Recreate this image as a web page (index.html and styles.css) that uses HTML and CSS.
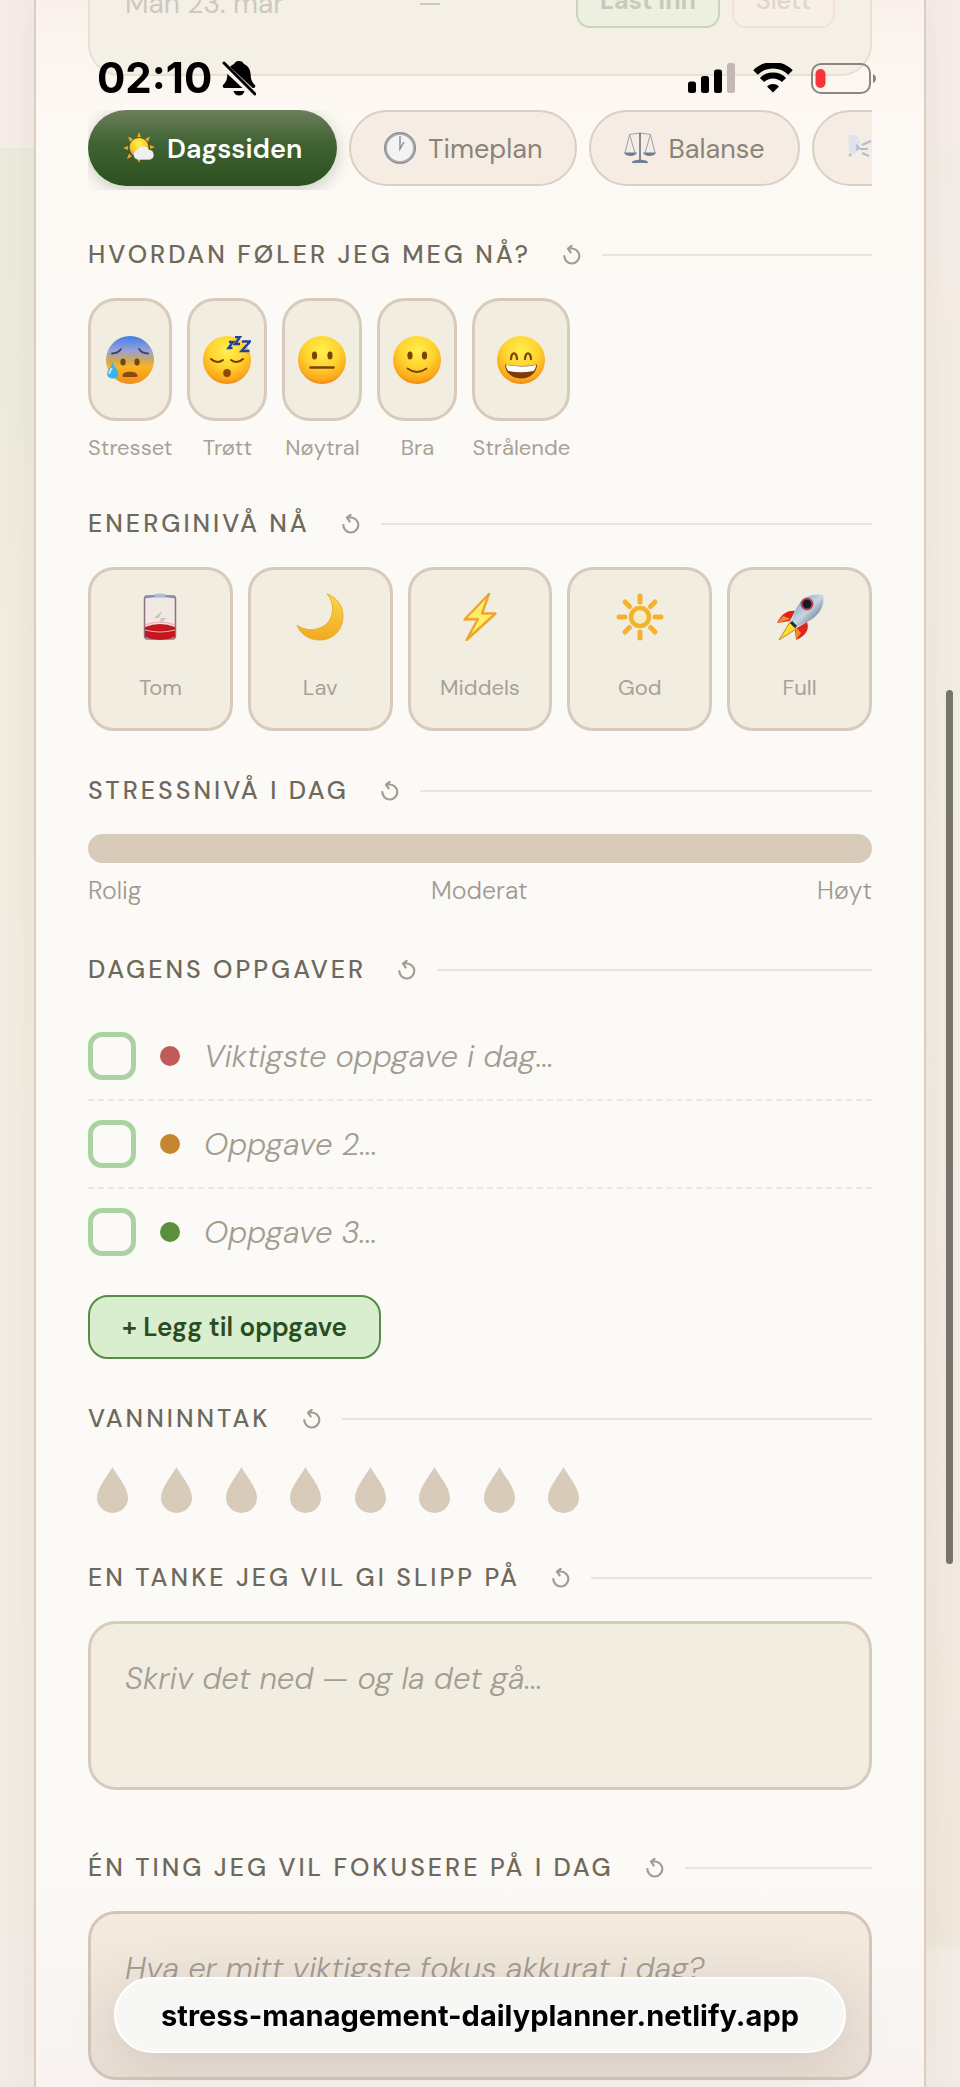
FILE: index.html
```html
<!DOCTYPE html>
<html lang="no">
<head>
    <meta charset="UTF-8">
    <meta name="viewport" content="width=device-width, initial-scale=1">
    <title>Dagsplanlegger</title>
    <link rel="stylesheet" href="styles.css">
</head>
<body>
    <!-- Shared drawings -->
    <svg class="defs" aria-hidden="true">
        <defs>
            <radialGradient id="skin" cx="50%" cy="30%" r="72%">
                <stop offset="0" stop-color="#fff04e"/>
                <stop offset="0.5" stop-color="#ffd32e"/>
                <stop offset="0.85" stop-color="#fba71c"/>
                <stop offset="1" stop-color="#ea8214"/>
            </radialGradient>
            <linearGradient id="cold" x1="0" y1="0" x2="0" y2="1">
                <stop offset="0" stop-color="#3f7fe8"/>
                <stop offset="0.3" stop-color="#9aa0d8"/>
                <stop offset="0.5" stop-color="#c9a95e"/>
                <stop offset="0.65" stop-color="#fcb322"/>
                <stop offset="1" stop-color="#ee8d1d"/>
            </linearGradient>
            <linearGradient id="gold" x1="0" y1="0" x2="0" y2="1">
                <stop offset="0" stop-color="#fbd54a"/>
                <stop offset="1" stop-color="#f2a91f"/>
            </linearGradient>
            <linearGradient id="steel" x1="0" y1="0" x2="1" y2="1">
                <stop offset="0" stop-color="#4c94d8"/>
                <stop offset="0.5" stop-color="#c9d6e0"/>
                <stop offset="1" stop-color="#2c4a6e"/>
            </linearGradient>
            <symbol id="reset" viewBox="0 0 18 20">
                <path d="M1.300 11a7.500 7.500 0 1 0 7.500-7.500H5.500M8.600.9 5 3.600l2.600 3.800" fill="none" stroke="currentColor" stroke-width="2.200" stroke-linecap="round" stroke-linejoin="round"/>
            </symbol>
            <symbol id="drop" viewBox="0 0 31 46">
                <path d="M15.500 0C20 9 31 20 31 31a15.500 15 0 0 1-31 0C0 20 11 9 15.500 0z" fill="currentColor"/>
            </symbol>
        </defs>
    </svg>

    <header class="statusbar">
        <span class="clock">02:10</span>
        <svg class="bell" width="34" height="36" viewBox="0 0 34 36" aria-hidden="true">
            <path d="M17 1c3 0 4.500 1.500 4.800 3 4.700 1.800 6.700 6 6.900 11 .2 5 1.300 7 4.300 10 .8 1.400 0 3-1.600 3H2.600C1 28 .2 26.400 1 25c3-3 4.100-5 4.300-10 .2-5 2.200-9.200 6.900-11 .3-1.500 1.800-3 4.800-3z"/>
            <path d="M11.500 31h11c-.8 3-2.800 4.500-5.500 4.500S12.300 34 11.500 31z"/>
            <path d="M1 5l32 30" stroke="#faf3ea" stroke-width="7"/>
            <path d="M2 3l31 31" stroke="#000" stroke-width="3" stroke-linecap="round"/>
        </svg>
        <span class="fill"></span>
        <svg width="47" height="30" viewBox="0 0 47 30" aria-hidden="true">
            <rect x="0" y="18.500" width="8" height="11.500" rx="2.500"/>
            <rect x="13" y="13" width="8" height="17" rx="2.500"/>
            <rect x="26" y="6.500" width="8" height="23.500" rx="2.500"/>
            <rect x="39" y="0" width="8" height="30" rx="2.500" fill="#c2b9b4"/>
        </svg>
        <svg class="wifi" width="40" height="30" viewBox="0 0 40 30" aria-hidden="true">
            <path d="M2.500 9.500a25 25 0 0 1 35 0" fill="none" stroke="#000" stroke-width="6.500"/>
            <path d="M9 17a15.500 15.500 0 0 1 22 0" fill="none" stroke="#000" stroke-width="6"/>
            <path d="M20 29.500l-6-6a8.500 8.500 0 0 1 12 0z"/>
        </svg>
        <svg width="66" height="31" viewBox="0 0 66 31" aria-hidden="true">
            <rect x="1" y="1" width="58" height="29" rx="9" fill="none" stroke="#8b8681" stroke-width="2"/>
            <rect x="4.500" y="6" width="10" height="19" rx="5" fill="#fa3438"/>
            <path d="M62 11c4 1 4 8 0 9z" fill="#8b8681"/>
        </svg>
    </header>

    <main class="sheet">
        <div class="history">
            <div class="history-row">
                <span class="history-date">Man 23. mar</span>
                <span class="history-value">—</span>
                <button class="mini load" type="button">Last inn</button>
                <button class="mini delete" type="button">Slett</button>
            </div>
        </div>

        <nav class="tabs">
            <button class="tab active" type="button">
                <svg width="32" height="32" viewBox="0 0 32 32" aria-hidden="true">
                    <path d="M16 0l2 5h-4zM5 4.500l5 2.500-3 3zM27 4.500l-2 5.500-3-3zM0 16l5-2v4zM32 15l-5-2v4zM4 27l2-5.500 3 3zM16 31l-2-5h4z" fill="#f4a423"/>
                    <circle cx="16" cy="15.500" r="9.500" fill="url(#skin)"/>
                    <path d="M15 27.500a5 5 0 0 1-.5-9.800 6.500 6.500 0 0 1 11.500 0 5 5 0 0 1 1 9.800z" fill="#eef0f2"/>
                    <path d="M12 25.500c4 2 12 2 17.500 0-.8 1.400-1.800 2-3 2H15c-1.400 0-2.400-.7-3-2z" fill="#cfd5da"/>
                </svg>
                Dagssiden
            </button>
            <button class="tab" type="button">
                <svg width="32" height="32" viewBox="0 0 32 32" aria-hidden="true">
                    <circle cx="16" cy="16" r="14.500" fill="#f3f3f5" stroke="#a9aaac" stroke-width="3"/>
                    <circle cx="16" cy="16" r="15.500" fill="none" stroke="#88898c" stroke-width="1"/>
                    <path d="M16 4v13l4-7" fill="none" stroke="#8f9092" stroke-width="1.500"/>
                </svg>
                Timeplan
            </button>
            <button class="tab" type="button">
                <svg width="32" height="32" viewBox="0 0 32 32" aria-hidden="true">
                    <path d="M5 2.500q11-3 22 0M5.500 2.500L1 21M5.500 2.500L11 21M26.500 2.500L21 21M26.500 2.500L31 21" fill="none" stroke="#9aa2ab" stroke-width="1"/>
                    <path d="M16 1v28" stroke="#69727c" stroke-width="1.600"/>
                    <path d="M0 20.500h13c-1 4.500-12 4.500-13 0zM19 20.500h13c-1 4.500-12 4.500-13 0zM8 31c0-3 4-2.500 8-3.500 4 1 8 .5 8 3.500z" fill="#6f7f92"/>
                </svg>
                Balanse
            </button>
            <button class="tab" type="button" aria-label="Pust">
                <svg width="32" height="32" viewBox="0 0 32 32" aria-hidden="true">
                    <path d="M1 3h9c2 3 4 8 3 12-1 2-3 2-2 5-2 2-5 1-6 5l-3-1V12z" fill="#dfe4ea"/>
                    <path d="M9 13l3 3-3 2M4 22l-2 2M13 17h8M15 13l9-4M15 21l7 3" fill="none" stroke="#b1bccd" stroke-width="2"/>
                </svg>
            </button>
        </nav>

        <section class="block">
            <h2 class="title">Hvordan føler jeg meg nå?
                <button class="reset" type="button" aria-label="Nullstill humør"><svg><use href="#reset"/></svg></button>
            </h2>
            <div class="moods">
                <button class="mood" type="button">
                    <span class="face">
                        <svg viewBox="0 0 48 48" aria-hidden="true">
                            <circle cx="24" cy="24" r="24" fill="url(#cold)"/>
                            <path d="M6 17.500q6 0 9-4.500M33 13q3 4.500 9 4.500" fill="none" stroke="#3c3f6c" stroke-width="1.800" stroke-linecap="round"/>
                            <ellipse cx="17" cy="26" rx="2.600" ry="3.500" fill="#7a4307"/>
                            <ellipse cx="31" cy="26" rx="2.600" ry="3.500" fill="#7a4307"/>
                            <path d="M16.500 39c1-4.500 14-4.500 15 0 .4 1.800-1 2-2 2h-11c-1 0-2.400-.2-2-2z" fill="#8b4a0b"/>
                            <path d="M6.500 26c1.500 5 6 8 6 12.500a6 5.500 0 0 1-11.500 0C1 34 5.500 31 6.500 26z" fill="#39b3ef"/>
                            <path d="M6 32c-2 3-3 4-2.500 6" stroke="#b9e9fd" stroke-width="2" fill="none"/>
                        </svg>
                    </span>
                    <span class="mood-label">Stresset</span>
                </button>
                <button class="mood" type="button">
                    <span class="face">
                        <svg viewBox="0 0 48 48" aria-hidden="true">
                            <circle cx="24" cy="24" r="24" fill="url(#skin)"/>
                            <path d="M8 23q6 5.500 12 1M28 24q6 4.500 12-1" fill="none" stroke="#6f3d06" stroke-width="2" stroke-linecap="round"/>
                            <ellipse cx="24" cy="37" rx="3.800" ry="4" fill="#8b4a0b"/>
                            <path d="M26 6h4l-4.500 6h4M32 1h5l-5 7h5M39 5.500h8L38.500 15h8" fill="none" stroke="#243f9c" stroke-width="2.400"/>
                        </svg>
                    </span>
                    <span class="mood-label">Trøtt</span>
                </button>
                <button class="mood" type="button">
                    <span class="face">
                        <svg viewBox="0 0 48 48" aria-hidden="true">
                            <circle cx="24" cy="24" r="24" fill="url(#skin)"/>
                            <ellipse cx="16.500" cy="19.500" rx="2.600" ry="4" fill="#7a4307"/>
                            <ellipse cx="32" cy="19.500" rx="2.600" ry="4" fill="#7a4307"/>
                            <path d="M12.500 31.500h23" stroke="#7a4307" stroke-width="2.400" stroke-linecap="round"/>
                        </svg>
                    </span>
                    <span class="mood-label">Nøytral</span>
                </button>
                <button class="mood" type="button">
                    <span class="face">
                        <svg viewBox="0 0 48 48" aria-hidden="true">
                            <circle cx="24" cy="24" r="24" fill="url(#skin)"/>
                            <ellipse cx="17" cy="19.500" rx="2.600" ry="4" fill="#7a4307"/>
                            <ellipse cx="31.500" cy="19.500" rx="2.600" ry="4" fill="#7a4307"/>
                            <path d="M14.500 32.500q9.500 7 19 0" fill="none" stroke="#7a4307" stroke-width="1.800" stroke-linecap="round"/>
                        </svg>
                    </span>
                    <span class="mood-label">Bra</span>
                </button>
                <button class="mood" type="button">
                    <span class="face">
                        <svg viewBox="0 0 48 48" aria-hidden="true">
                            <circle cx="24" cy="24" r="24" fill="url(#skin)"/>
                            <path d="M14 23c.5-7.500 5.500-7.500 6 0M28 23c.5-7.500 5.500-7.500 6 0" fill="none" stroke="#7a4307" stroke-width="2.300" stroke-linecap="round"/>
                            <path d="M8 28.500q16 3 32 0c0 8-7 14-16 14S8 36.500 8 28.500z" fill="#7c3c07"/>
                            <path d="M9 29q15 3 30 0c0 3-1.500 5-2.500 6q-12.500 2.500-25 0C10.500 34 9 32 9 29z" fill="#fff"/>
                        </svg>
                    </span>
                    <span class="mood-label">Strålende</span>
                </button>
            </div>
        </section>

        <section class="block">
            <h2 class="title">Energinivå nå
                <button class="reset" type="button" aria-label="Nullstill energi"><svg><use href="#reset"/></svg></button>
            </h2>
            <div class="energy">
                <button class="level" type="button">
                    <svg viewBox="0 0 48 48" aria-hidden="true">
                        <rect x="8.500" y="3" width="31" height="43" rx="3" fill="#f1e8e4" stroke="#8d7280" stroke-width="1.500"/>
                        <path d="M8 3.500q16-4 32 0v2q-16-2.500-32 0z" fill="#8593ad"/>
                        <ellipse cx="24" cy="2.500" rx="6" ry="2" fill="#a9bdd6"/>
                        <path d="M9 34q15-6 30 0v10q-15 6-30 0z" fill="#c4161f"/>
                        <path d="M9 32q15-6 30 0M9 37q15 4 30 0" fill="none" stroke="#f0a9a8" stroke-width="1.200"/>
                        <path d="M26 18l-8 7h5l-3 6M26 18l-1 7h6l-7 5" fill="#c7c3c3"/>
                    </svg>
                    Tom
                </button>
                <button class="level" type="button">
                    <svg viewBox="0 0 48 48" aria-hidden="true">
                        <path d="M31 1c9 3 16 11 16 22 0 14-10 24-23 24C13 47 4 41 1 32c4 3 10 5.500 17 4.500 11-1.500 18-9 18.500-19C37 11 34.500 5 31 1z" fill="url(#gold)" stroke="#e3b230" stroke-width="1"/>
                    </svg>
                    Lav
                </button>
                <button class="level" type="button">
                    <svg viewBox="0 0 48 48" aria-hidden="true">
                        <path d="M33 1L8.500 26.500l13.500-.5L10.500 47 39.500 20.500H26z" fill="#fff06a" stroke="#f2a32a" stroke-width="2.400" stroke-linejoin="round"/>
                    </svg>
                    Middels
                </button>
                <button class="level" type="button">
                    <svg viewBox="0 0 48 48" aria-hidden="true">
                        <circle cx="24" cy="24" r="9" fill="#f7ecc5" stroke="#f3b32a" stroke-width="4.500"/>
                        <path d="M24 3v6M24 39v6M3 24h6M39 24h6M9 9l4.500 4.500M34.500 34.500L39 39M39 9l-4.500 4.500M13.500 34.500L9 39" stroke="#f5b32c" stroke-width="5" stroke-linecap="round"/>
                    </svg>
                    God
                </button>
                <button class="level" type="button">
                    <svg viewBox="0 0 48 48" aria-hidden="true">
                        <path d="M19 18c-8-1-14 4-18 12l13-2zM31 29c3 8-2 14-11 18l-1-11z" fill="#e2231b"/>
                        <path d="M1 30l6-7 8 3zM20 47l5-7-5-6z" fill="#f58a2b"/>
                        <path d="M14 29L3 47l17-11z" fill="#fbdf32" stroke="#c98a16" stroke-width="1"/>
                        <path d="M47 2C34 0 24 6 19 18l-4 11 5 5 11-5C43 23 49 13 47 2z" fill="url(#steel)"/>
                        <path d="M15 29l5 5" stroke="#1d2b3c" stroke-width="3"/>
                        <circle cx="31" cy="11" r="5.500" fill="#1a1b22" stroke="#b54750" stroke-width="2"/>
                    </svg>
                    Full
                </button>
            </div>
        </section>

        <section class="block">
            <h2 class="title">Stressnivå i dag
                <button class="reset" type="button" aria-label="Nullstill stressnivå"><svg><use href="#reset"/></svg></button>
            </h2>
            <input class="stress" type="range" min="0" max="10" value="0" aria-label="Stressnivå i dag">
            <div class="scale">
                <span>Rolig</span>
                <span>Moderat</span>
                <span>Høyt</span>
            </div>
        </section>

        <section class="block">
            <h2 class="title">Dagens oppgaver
                <button class="reset" type="button" aria-label="Nullstill oppgaver"><svg><use href="#reset"/></svg></button>
            </h2>
            <div class="task">
                <input class="check" type="checkbox" aria-label="Oppgave 1 ferdig">
                <span class="dot red"></span>
                <input class="task-text" type="text" aria-label="Oppgave 1" placeholder="Viktigste oppgave i dag...">
            </div>
            <div class="task">
                <input class="check" type="checkbox" aria-label="Oppgave 2 ferdig">
                <span class="dot orange"></span>
                <input class="task-text" type="text" aria-label="Oppgave 2" placeholder="Oppgave 2...">
            </div>
            <div class="task">
                <input class="check" type="checkbox" aria-label="Oppgave 3 ferdig">
                <span class="dot green"></span>
                <input class="task-text" type="text" aria-label="Oppgave 3" placeholder="Oppgave 3...">
            </div>
            <button class="add" type="button">+ Legg til oppgave</button>
        </section>

        <section class="block">
            <h2 class="title">Vanninntak
                <button class="reset" type="button" aria-label="Nullstill vann"><svg><use href="#reset"/></svg></button>
            </h2>
            <div class="water">
                <button class="glass" type="button" aria-label="Glass 1"><svg><use href="#drop"/></svg></button>
                <button class="glass" type="button" aria-label="Glass 2"><svg><use href="#drop"/></svg></button>
                <button class="glass" type="button" aria-label="Glass 3"><svg><use href="#drop"/></svg></button>
                <button class="glass" type="button" aria-label="Glass 4"><svg><use href="#drop"/></svg></button>
                <button class="glass" type="button" aria-label="Glass 5"><svg><use href="#drop"/></svg></button>
                <button class="glass" type="button" aria-label="Glass 6"><svg><use href="#drop"/></svg></button>
                <button class="glass" type="button" aria-label="Glass 7"><svg><use href="#drop"/></svg></button>
                <button class="glass" type="button" aria-label="Glass 8"><svg><use href="#drop"/></svg></button>
            </div>
        </section>

        <section class="block">
            <h2 class="title">En tanke jeg vil gi slipp på
                <button class="reset" type="button" aria-label="Nullstill tanke"><svg><use href="#reset"/></svg></button>
            </h2>
            <textarea class="note" aria-label="En tanke jeg vil gi slipp på" placeholder="Skriv det ned — og la det gå..."></textarea>
        </section>

        <section class="block">
            <h2 class="title">Én ting jeg vil fokusere på i dag
                <button class="reset" type="button" aria-label="Nullstill fokus"><svg><use href="#reset"/></svg></button>
            </h2>
            <textarea class="note focus" aria-label="Én ting jeg vil fokusere på i dag" placeholder="Hva er mitt viktigste fokus akkurat i dag?"></textarea>
        </section>
    </main>

    <div class="scroll-thumb"></div>
    <div class="address">stress-management-dailyplanner.netlify.app</div>
</body>
</html>
```
FILE: styles.css
```css
* {
    box-sizing: border-box;
}

body {
    margin: 0;
    min-height: 100vh;
    overflow: hidden;
    font-family: "DM Sans", Inter, "Liberation Sans", sans-serif;
    color: #6f695c;
    background:
        linear-gradient(#f5ece8, #f5ece7) 0 0 / 100% 148px no-repeat,
        linear-gradient(#f4ebe6, #f1ece1 30%, #f3ebe3 60%, #f0e7dc) 100% 148px / 50% 1800px no-repeat,
        linear-gradient(#e9e9dc, #f0ecdf 30%, #f3ece4 70%, #f2ebe5);
}

button,
input,
textarea {
    font-family: inherit;
}

button {
    padding: 0;
    border: 0;
    background: none;
    color: inherit;
    cursor: pointer;
}

.defs {
    position: absolute;
    width: 0;
    height: 0;
}

/* Phone status bar */
.statusbar {
    position: fixed;
    top: 56px;
    left: 0;
    right: 0;
    z-index: 2;
    height: 44px;
    padding: 0 83px 0 97px;
    display: flex;
    align-items: center;
}

.clock {
    font-family: Inter, sans-serif;
    font-size: 42px;
    line-height: 44px;
    font-weight: 700;
    color: #000;
}

.bell {
    margin-left: 10px;
}

.fill {
    flex: 1;
}

.wifi {
    margin: 0 18px;
}

/* Page */
.sheet {
    min-height: 100vh;
    margin: 0 34px;
    padding: 0 52px 7px;
    border: 2px solid #d9cec1;
    border-width: 0 2px;
    background: linear-gradient(#fbf1ec, #fdf8f3 110px, #fcfaf6 300px, #fcfaf6 1850px, #f8f3f0);
    box-shadow: 0 0 30px rgba(120, 100, 70, 0.08);
}

.history {
    height: 76px;
    overflow: hidden;
    display: flex;
    align-items: flex-end;
}

.history-row {
    flex: 1;
    height: 140px;
    padding: 0 35px 46px;
    display: flex;
    align-items: flex-end;
    border: 2px solid #e9dfd2;
    border-radius: 32px;
    background: #f5f0e5;
    font-size: 28px;
    line-height: 30px;
    color: #cec8c0;
}

.history-date {
    flex: 2;
    padding-bottom: 9px;
}

.history-value {
    flex: 1;
    padding-bottom: 9px;
}

.mini {
    height: 60px;
    margin-left: 12px;
    padding: 4px 22px 0;
    border: 2px solid #c9d6bd;
    border-radius: 14px;
    background: #edf0e0;
    font-size: 25px;
    font-weight: 700;
    color: #c6cab9;
}

.mini.delete {
    border-color: #f0e2da;
    background: #f8efe7;
    font-weight: 500;
    color: #ddd5cf;
}

/* Tabs */
.tabs {
    display: flex;
    gap: 12px;
    height: 80px;
    margin-top: 34px;
    overflow: hidden;
}

.tab {
    flex: none;
    display: flex;
    align-items: center;
    gap: 12px;
    height: 76px;
    padding: 0 33px;
    border: 2px solid #dbcfc3;
    border-radius: 38px;
    background: #f5ede3;
    font-size: 27px;
    font-weight: 400;
    color: #8b8379;
}

.tab.active {
    border-color: transparent;
    background: linear-gradient(#6b7f5c, #3f6232 45%, #2d5020) border-box;
    box-shadow: 0 4px 16px rgba(45, 80, 32, 0.25);
    font-weight: 600;
    color: #fff;
}

/* Sections */
.block {
    margin-top: 44px;
}

.tabs + .block {
    margin-top: 49px;
}

.title {
    display: flex;
    align-items: center;
    margin: 0 0 27px;
    font-size: 25px;
    line-height: 32px;
    font-weight: 500;
    letter-spacing: 3px;
    text-transform: uppercase;
}

.title::after {
    content: "";
    flex: 1;
    height: 2px;
    background: #ece4d9;
}

.reset {
    width: 18px;
    height: 20px;
    margin: 0 21px 0 32px;
    color: #a39c92;
}

.reset svg {
    display: block;
    width: 18px;
    height: 20px;
}

/* Mood */
.moods {
    display: flex;
    gap: 15px;
}

.mood {
    min-width: 80px;
    display: flex;
    flex-direction: column;
    gap: 10px;
}

.face {
    width: 100%;
    height: 123px;
    display: flex;
    align-items: center;
    justify-content: center;
    border: 3px solid #d8cbba;
    border-radius: 28px;
    background: #f2ede1;
}

.face svg {
    width: 48px;
    height: 48px;
}

.mood-label {
    width: 100%;
    font-size: 22px;
    line-height: 33px;
    font-weight: 400;
    text-align: center;
    color: #a8a198;
}

/* Energy */
.energy {
    display: grid;
    grid-template-columns: repeat(5, 1fr);
    gap: 15px;
}

.level {
    height: 164px;
    display: flex;
    flex-direction: column;
    align-items: center;
    justify-content: center;
    gap: 30px;
    border: 3px solid #d8cbba;
    border-radius: 26px;
    background: #f2ede1;
    font-size: 22px;
    line-height: 34px;
    font-weight: 400;
    color: #a8a198;
}

.level svg {
    width: 48px;
    height: 48px;
}

/* Stress */
.stress {
    appearance: none;
    display: block;
    width: 100%;
    height: 29px;
    margin: 0;
    border-radius: 15px;
    background: #d8cbba;
}

.stress::-webkit-slider-thumb {
    appearance: none;
    width: 29px;
    height: 29px;
    background: transparent;
}

.scale {
    display: flex;
    justify-content: space-between;
    padding: 11px 0 2px;
    font-size: 25px;
    line-height: 34px;
    font-weight: 300;
    color: #a09990;
}

/* Tasks */
.task {
    display: flex;
    align-items: center;
    padding: 19px 0;
    border-bottom: 2px dashed #f0e6d9;
}

.task:nth-of-type(3) {
    border-bottom: 0;
}

.check {
    appearance: none;
    width: 48px;
    height: 48px;
    margin: 0;
    border: 5px solid #abd3a0;
    border-radius: 14px;
}

.dot {
    width: 20px;
    height: 20px;
    margin: 0 24px;
    border-radius: 50%;
}

.red {
    background: #c15b5b;
}

.orange {
    background: #c6862e;
}

.green {
    background: #5a8f3e;
}

.task-text {
    flex: 1;
    min-width: 0;
    height: 48px;
    padding: 0;
    border: 0;
    background: none;
    font-size: 31px;
    font-weight: 300;
}

.task-text::placeholder,
.note::placeholder {
    font-style: italic;
    color: #a39c92;
    opacity: 1;
}

.add {
    display: block;
    height: 64px;
    margin-top: 20px;
    padding: 0 32px;
    border: 2px solid #5a8a48;
    border-radius: 20px;
    background: #d8eecf;
    font-size: 26px;
    font-weight: 600;
    color: #2a4d20;
}

/* Water */
.water {
    display: flex;
    justify-content: space-between;
    max-width: 500px;
}

.glass {
    width: 48px;
    height: 56px;
    display: flex;
    align-items: center;
    justify-content: center;
    color: #d8cbba;
}

.glass svg {
    width: 31px;
    height: 46px;
}

/* Notes */
.note {
    display: block;
    width: 100%;
    height: 169px;
    margin-bottom: 62px;
    padding: 33px 34px;
    resize: none;
    border: 3px solid #d8cbba;
    border-radius: 28px;
    background: #f2ede1;
    font-size: 31px;
    line-height: 44px;
    font-weight: 300;
}

.focus {
    margin-bottom: 0;
    border-color: #d3c6b8;
    background: linear-gradient(#f3ebdf, #e9dfd5);
}

/* Floating address and scrollbar */
.scroll-thumb {
    position: fixed;
    top: 690px;
    right: 7px;
    width: 7px;
    height: 874px;
    border-radius: 4px;
    background: #77736d;
}

.address {
    position: fixed;
    left: 114px;
    right: 114px;
    bottom: 34px;
    height: 76px;
    border: 2px solid #fff;
    border-radius: 38px;
    background: #f7f8f6;
    box-shadow: 0 10px 50px rgba(90, 70, 60, 0.15);
    font-family: Inter, sans-serif;
    font-size: 29px;
    line-height: 74px;
    font-weight: 700;
    text-align: center;
    color: #000;
}
```
